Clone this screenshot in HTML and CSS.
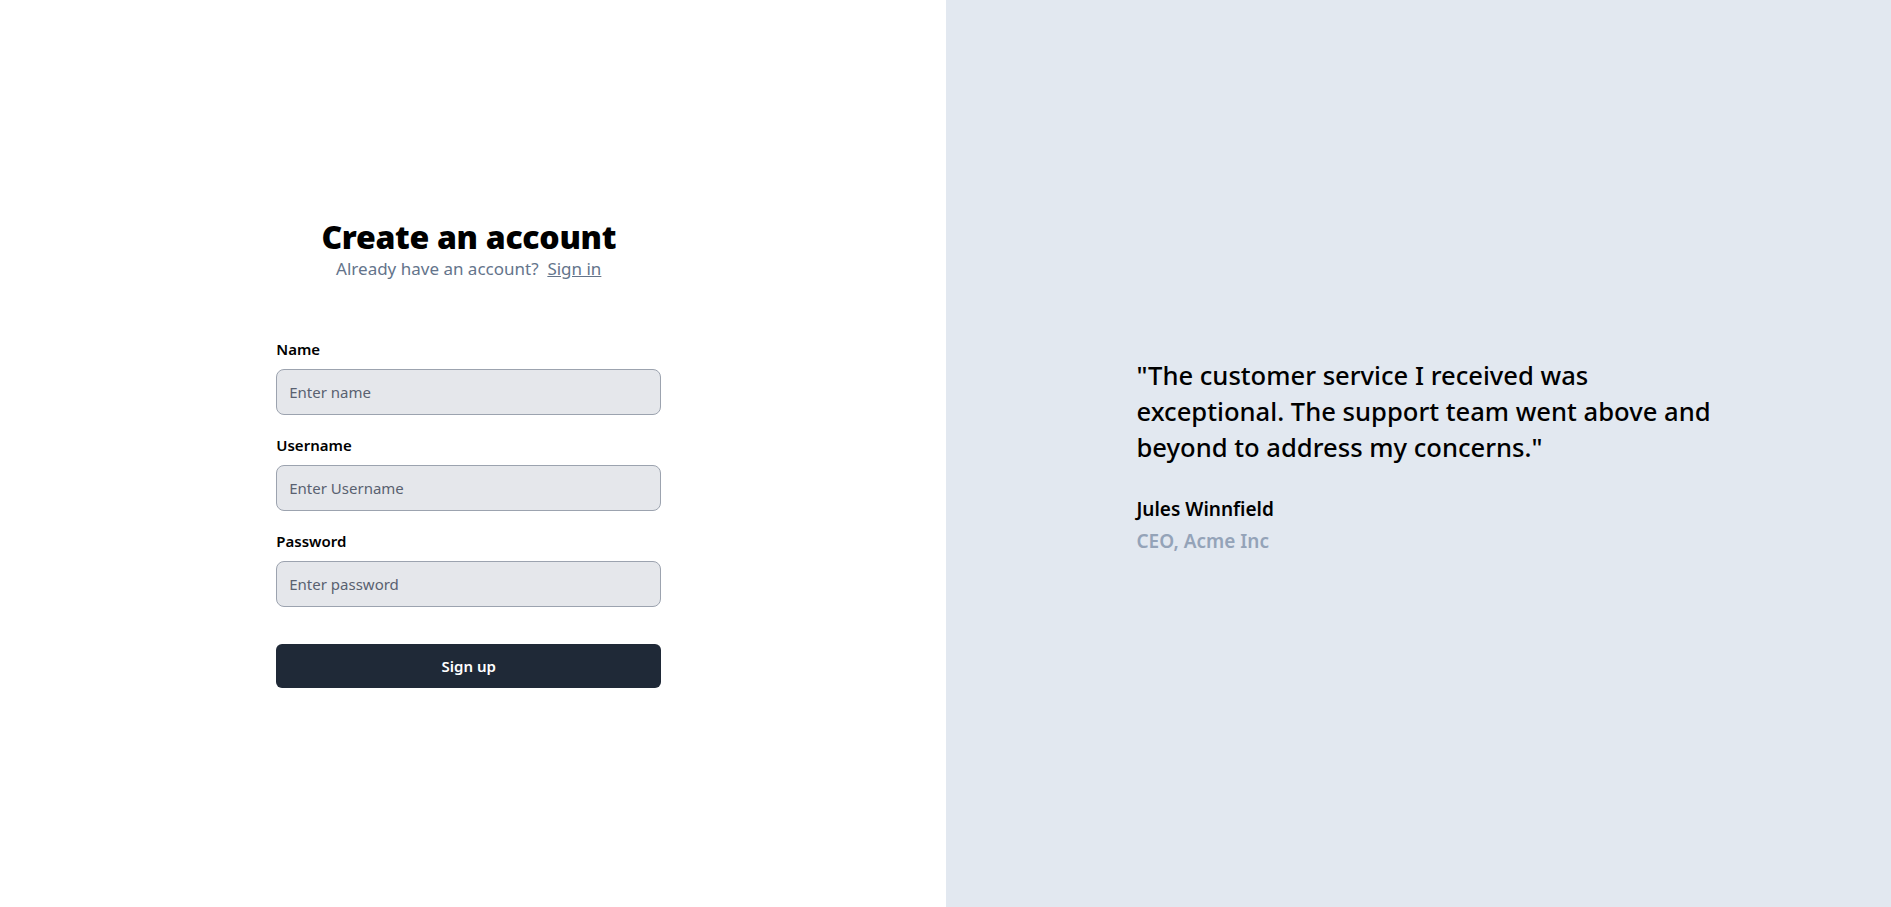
FILE: index.html
```html
<!DOCTYPE html>
<html lang="en">
<head>
<meta charset="utf-8">
<title>Create an account</title>
<link rel="stylesheet" href="styles.css">
</head>
<body>
<div class="page">
  <section class="left">
    <div class="card">
      <div class="header">
        <h1 class="title">Create an account</h1>
        <p class="subtitle">Already have an account?&nbsp; <a class="link" href="#">Sign in</a></p>
      </div>
      <form class="form">
        <div class="field">
          <label class="label" for="name">Name</label>
          <input class="input" id="name" type="text" placeholder="Enter name">
        </div>
        <div class="field">
          <label class="label" for="username">Username</label>
          <input class="input" id="username" type="text" placeholder="Enter Username">
        </div>
        <div class="field">
          <label class="label" for="password">Password</label>
          <input class="input" id="password" type="password" placeholder="Enter password">
        </div>
        <button class="button" type="button">Sign up</button>
      </form>
    </div>
  </section>
  <section class="right">
    <div class="testimonial">
      <p class="quote">"The customer service I received was exceptional. The support team went above and beyond to address my concerns."</p>
      <p class="author">Jules Winnfield</p>
      <p class="role">CEO, Acme Inc</p>
    </div>
  </section>
</div>
</body>
</html>
```
FILE: styles.css
```css
* { box-sizing: border-box; }
html, body { margin: 0; padding: 0; }
body {
  font-family: "Noto Sans", "Open Sans", sans-serif;
  color: #000;
  background: #fff;
}
.page {
  display: grid;
  grid-template-columns: 1fr 1fr;
  height: 100vh;
}
.left {
  display: flex;
  align-items: center;
  justify-content: center;
  padding-right: 8px;
  background: #fff;
}
.card { width: 385px; }
.header { text-align: center; }
.title {
  margin: 0;
  font-size: 32px;
  line-height: 36px;
  font-weight: 900;
  letter-spacing: -0.3px;
  color: #000;
}
.subtitle {
  margin: 0;
  font-size: 17px;
  line-height: 28px;
  color: #64748b;
}
.link { color: #64748b; text-decoration: underline; }
.form {
  margin-top: 54px;
  display: flex;
  flex-direction: column;
  gap: 18px;
}
.field { display: flex; flex-direction: column; gap: 8px; }
.label {
  font-size: 15px;
  line-height: 24px;
  font-weight: 600;
  color: #000;
}
.input {
  height: 46px;
  width: 100%;
  padding: 0 12px;
  border: 1px solid #9ca3af;
  border-radius: 8px;
  background: #e5e7eb;
  font-family: inherit;
  font-size: 15px;
  color: #111827;
}
.input::placeholder { color: #596170; }
.button {
  margin-top: 19px;
  height: 44px;
  width: 100%;
  border: 0;
  border-radius: 6px;
  background: #1f2937;
  color: #fff;
  font-family: inherit;
  font-size: 15px;
  font-weight: 600;
}
.right {
  background: #e2e8f0;
  display: flex;
  align-items: center;
  padding-left: 191px;
  padding-top: 6px;
}
.testimonial { max-width: 590px; }
.quote {
  margin: 0;
  font-size: 25.6px;
  line-height: 36px;
  font-weight: 500;
  color: #000;
}
.author {
  margin: 29px 0 0;
  font-size: 19px;
  line-height: 28px;
  font-weight: 600;
  color: #000;
}
.role {
  margin: 4px 0 0;
  font-size: 19px;
  line-height: 28px;
  font-weight: 600;
  color: #94a3b8;
}
```
